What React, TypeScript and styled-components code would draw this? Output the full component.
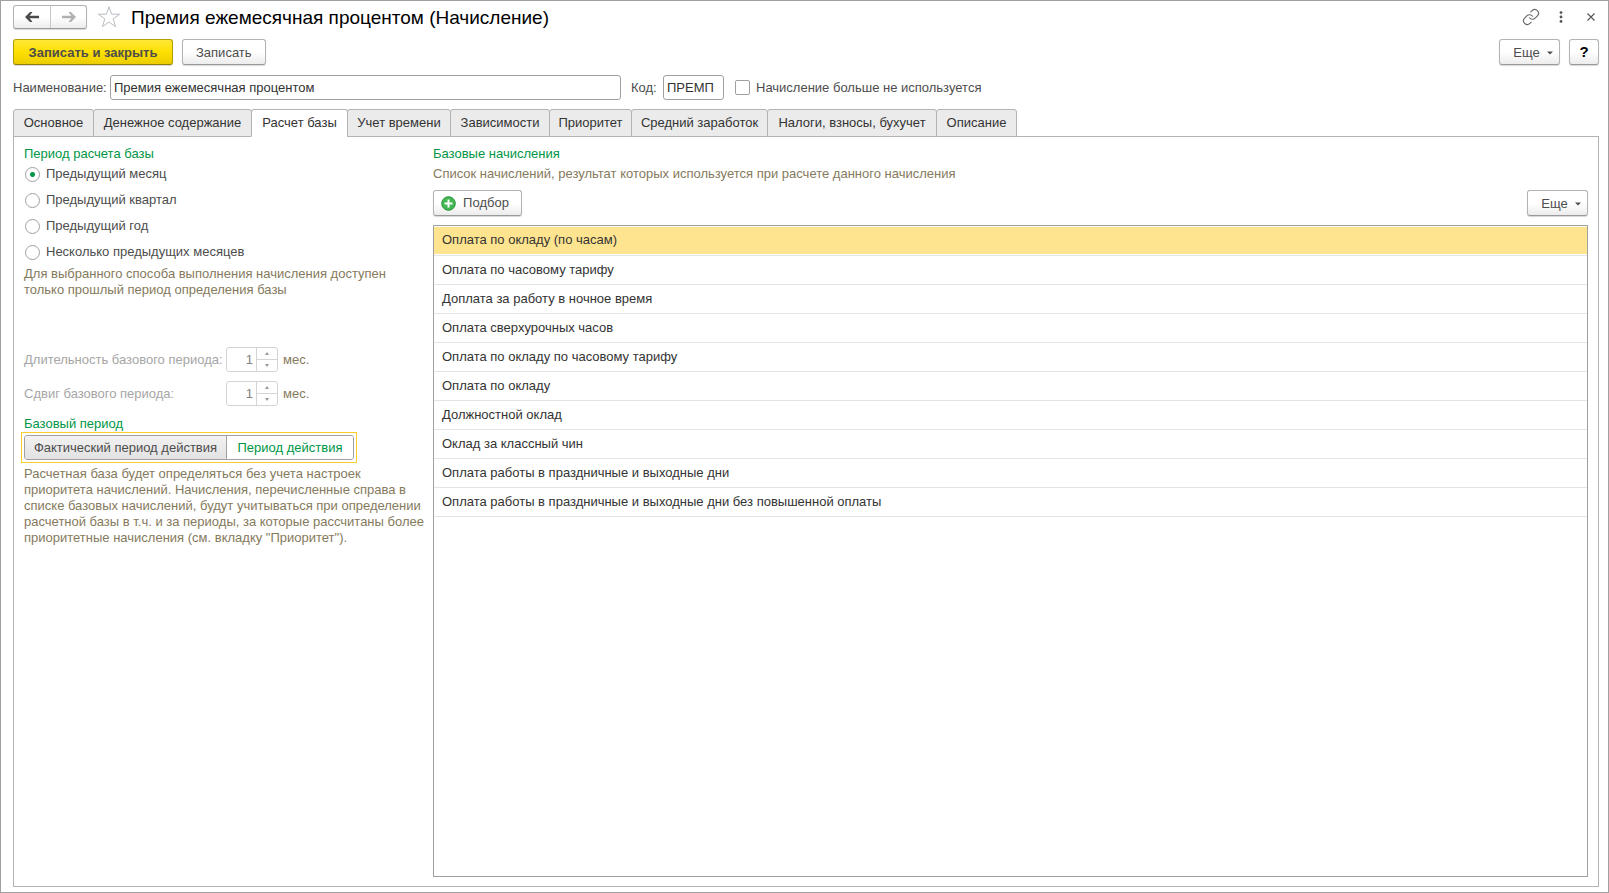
import React, { useState } from "react";
import styled, { createGlobalStyle, css } from "styled-components";
import { Link as LinkIcon } from "lucide-react";

const GlobalStyle = createGlobalStyle`
  *, *::before, *::after { box-sizing: border-box; }
  body { margin: 0; background: #fff; }
  body, button, input { font-family: "Liberation Sans", Arial, sans-serif; font-size: 13px; line-height: 16px; color: #4d4d4d; }
  h1, h2, p, fieldset, legend { margin: 0; padding: 0; border: 0; font-weight: normal; }
`;

const Window = styled.main`
  display: flex;
  flex-direction: column;
  min-height: 100vh;
  padding: 4px 9px 5px 12px;
  border: 1px solid #a0a0a0;
  background: #fff;
`;

const TitleBar = styled.header`
  display: flex;
  align-items: center;
  height: 24px;
  margin-bottom: 10px;
`;

const Title = styled.h1`
  flex: 1;
  padding-top: 1px;
  color: #000;
  font-size: 19px;
  line-height: 24px;
`;

const NavGroup = styled.div`
  display: flex;
  height: 24px;
  border: 1px solid #b3b3b3;
  border-bottom-color: #9a9a9a;
  border-radius: 3px;
  background: linear-gradient(#fff 50%, #ececec);
  box-shadow: 0 1px 1px #d8d8d8;
`;

const NavButton = styled.button`
  display: flex;
  align-items: center;
  justify-content: center;
  width: 36px;
  padding: 0;
  border: 0;
  background: none;
  & + & { border-left: 1px solid #c8c8c8; }
`;

const IconButton = styled.button`
  display: flex;
  align-items: center;
  justify-content: center;
  width: 30px;
  height: 24px;
  padding: 0;
  border: 0;
  background: none;
`;

const StarButton = styled(IconButton)`
  width: 24px;
  margin: 0 10px;
`;

const WindowTools = styled.div`
  display: flex;
  margin-right: -7px;
`;

const CommandBar = styled.div`
  display: flex;
  gap: 9px;
  margin-bottom: 10px;
`;

const Spacer = styled.div`
  flex: 1;
`;

const Button = styled.button<{ $primary?: boolean }>`
  display: flex;
  align-items: center;
  justify-content: center;
  height: 26px;
  padding: 1px 13px 0;
  border: 1px solid #b3b3b3;
  border-bottom-color: #9a9a9a;
  border-radius: 3px;
  background: linear-gradient(#fff 50%, #ececec);
  box-shadow: 0 1px 1px #d8d8d8;
  ${(p) =>
    p.$primary &&
    css`
      min-width: 160px;
      border-color: #b59f00;
      border-bottom-color: #8f7e00;
      background: linear-gradient(#ffe838, #ffdf00 50%, #ebcd00);
      font-weight: bold;
    `}
`;

const MoreButton = styled(Button)`
  gap: 7px;
  width: 61px;
  padding: 1px 5px 0 12px;
`;

const HelpButton = styled(Button)`
  width: 30px;
  padding: 0;
  color: #000;
  font-size: 15px;
  font-weight: bold;
`;

const PickButton = styled(Button)`
  gap: 7px;
  width: 89px;
  padding: 0 12px 0 7px;
`;

const FieldBar = styled.div`
  display: flex;
  align-items: center;
  margin-bottom: 9px;
`;

const FieldLabel = styled.label<{ $width: number }>`
  width: ${(p) => p.$width}px;
  white-space: nowrap;
`;

const TextField = styled.input<{ $width: number }>`
  width: ${(p) => p.$width}px;
  height: 25px;
  margin: 0 10px 0 0;
  padding: 0 3px;
  border: 1px solid #a0a0a0;
  border-radius: 3px;
  color: #333;
`;

const CheckLabel = styled.label`
  display: flex;
  align-items: center;
  gap: 6px;
  padding-left: 1px;
`;

const Checkbox = styled.input`
  appearance: none;
  width: 15px;
  height: 15px;
  margin: 0;
  border: 1px solid #a0a0a0;
  border-radius: 2px;
  background: #fff;
  &:checked { background: #009646; box-shadow: inset 0 0 0 3px #fff; }
`;

const TabBar = styled.div`
  position: relative;
  display: flex;
  margin-bottom: -1px;
`;

const Tab = styled.button<{ $active: boolean; $width: number }>`
  width: ${(p) => p.$width}px;
  height: 28px;
  padding: 0;
  border: 1px solid #b3b3b3;
  border-radius: 3px 3px 0 0;
  background: #ebebeb;
  color: #333;
  white-space: nowrap;
  & + & { margin-left: -1px; }
  ${(p) => p.$active && css`
    border-bottom-color: #fff;
    background: #fff;
  `}
`;

const Panel = styled.section`
  display: grid;
  grid-template-columns: 400px minmax(0, 1fr);
  gap: 9px;
  flex: 1;
  padding: 9px 10px;
  border: 1px solid #b3b3b3;
`;

const Column = styled.div`
  display: flex;
  flex-direction: column;
`;

const Heading = styled.h2`
  color: #009646;
  font-size: 13px;
  line-height: 16px;
`;

const ListHeading = styled(Heading)`
  margin-bottom: 4px;
`;

const Hint = styled.p`
  color: #857a5c;
`;

const RadioList = styled.fieldset`
  display: flex;
  flex-direction: column;
  margin-bottom: 1px;
`;

const RadioLegend = styled.legend`
  margin-bottom: -1px;
  color: #009646;
`;

const RadioLabel = styled.label`
  display: flex;
  align-items: center;
  gap: 6px;
  height: 26px;
  padding-left: 1px;
`;

const Radio = styled.input`
  appearance: none;
  width: 15px;
  height: 15px;
  margin: 0;
  border: 1px solid #a0a0a0;
  border-radius: 50%;
  background: #fff;
  &:checked { background: radial-gradient(circle, #009646 2px, #fff 3px); }
`;

const Durations = styled.div`
  display: flex;
  flex-direction: column;
  gap: 9px;
  margin: 49px 0 10px;
`;

const DurationRow = styled.div`
  display: grid;
  grid-template-columns: 202px 52px auto;
  align-items: center;
  color: #857a5c;
`;

const DurationLabel = styled.label`
  color: #a6a6a6;
`;

const Unit = styled.span`
  margin-left: 5px;
`;

const Spinner = styled.div`
  display: flex;
  height: 25px;
  border: 1px solid #d4d4d4;
  border-radius: 3px;
`;

const SpinInput = styled.input`
  width: 29px;
  padding: 0 3px;
  border: 0;
  background: none;
  color: #808080;
  text-align: right;
`;

const SpinButtons = styled.div`
  display: flex;
  flex: 1;
  flex-direction: column;
  border-left: 1px solid #d4d4d4;
`;

const SpinButton = styled.button`
  display: flex;
  flex: 1;
  align-items: center;
  justify-content: center;
  padding: 0;
  border: 0;
  background: none;
  & + & { border-top: 1px solid #d4d4d4; }
`;

const FocusFrame = styled.div`
  align-self: flex-start;
  margin: 0 0 3px -3px;
  padding: 2px;
  border: 1px solid #f7cf2d;
`;

const Switch = styled.div`
  display: flex;
  border: 1px solid #a0a0a0;
  border-radius: 3px;
`;

const SwitchButton = styled.button<{ $on: boolean; $width: number }>`
  width: ${(p) => p.$width}px;
  height: 23px;
  padding: 0;
  border: 0;
  border-radius: 2px;
  background: ${(p) => (p.$on ? "#fff" : "linear-gradient(#f2f2f2, #e2e2e2)")};
  color: ${(p) => (p.$on ? "#009646" : "#4d4d4d")};
  white-space: nowrap;
  & + & { border-left: 1px solid #a0a0a0; border-radius: 0 2px 2px 0; }
`;

const ListTools = styled.div`
  display: flex;
  justify-content: space-between;
  margin: 8px 0 9px;
`;

const ListFrame = styled.div`
  flex: 1;
  border: 1px solid #a0a0a0;
`;

const List = styled.table`
  width: 100%;
  border-collapse: collapse;
`;

const Cell = styled.td<{ $selected: boolean }>`
  height: 29px;
  padding: 0 8px;
  border-bottom: 1px solid #e4e4e4;
  color: #333;
  ${(p) => p.$selected && css`
    background: #ffe48f;
    box-shadow: inset 0 1px #fff, inset 0 -1px #fff;
  `}
`;

const Arrow = ({ color, back }: { color: string; back?: boolean }) => (
  <svg width="14" height="10" viewBox="0 0 14 10" fill={color}>
    <path d={back ? "M0 5L5 0H7.200V0.600L4.600 3.800H14V6.200H4.600L7.200 9.400V10H5Z" : "M14 5L9 0H6.800V0.600L9.400 3.800H0V6.200H9.400L6.800 9.400V10H9Z"} />
  </svg>
);

const Caret = () => (
  <svg width="6" height="4" viewBox="0 0 6 4" fill="#4d4d4d">
    <path d="M0 0.5H6L3 3.5Z" />
  </svg>
);

const SpinArrow = ({ up }: { up?: boolean }) => (
  <svg width="4" height="3" viewBox="0 0 4 3" fill="#999">
    <path d={up ? "M0 3L2 0L4 3Z" : "M0 0L2 3L4 0Z"} />
  </svg>
);

const Star = () => (
  <svg width="24" height="24" viewBox="0 0 24 24" fill="#fff" stroke="#b8bcc2">
    <path d="M12 1.8L14.6 9.2H22.6L16.2 13.9L18.6 21.7L12 17L5.4 21.7L7.8 13.9L1.4 9.2H9.4Z" />
  </svg>
);

const Dots = () => (
  <svg width="4" height="12" viewBox="0 0 4 12" fill="#555">
    <circle cx="2" cy="1.6" r="1.4" />
    <circle cx="2" cy="6" r="1.4" />
    <circle cx="2" cy="10.4" r="1.4" />
  </svg>
);

const Cross = () => (
  <svg width="8" height="8" viewBox="0 0 8 8" stroke="#555" strokeWidth="1.1">
    <path d="M0.5 0.5L7.5 7.5M7.5 0.5L0.5 7.5" />
  </svg>
);

const Plus = () => (
  <svg width="15" height="15" viewBox="0 0 15 15">
    <circle cx="7.5" cy="7.5" r="6.8" fill="#43b752" stroke="#279239" />
    <path d="M7.5 3.5V11.5M3.5 7.5H11.5" stroke="#fff" strokeWidth="2" />
  </svg>
);

const tabs = [
  { name: "Основное", width: 81 },
  { name: "Денежное содержание", width: 159 },
  { name: "Расчет базы", width: 97 },
  { name: "Учет времени", width: 104 },
  { name: "Зависимости", width: 100 },
  { name: "Приоритет", width: 83 },
  { name: "Средний заработок", width: 137 },
  { name: "Налоги, взносы, бухучет", width: 170 },
  { name: "Описание", width: 81 },
];

const modes = [
  { name: "Фактический период действия", width: 201 },
  { name: "Период действия", width: 127 },
];

const periods = ["Предыдущий месяц", "Предыдущий квартал", "Предыдущий год", "Несколько предыдущих месяцев"];

const accruals = [
  "Оплата по окладу (по часам)",
  "Оплата по часовому тарифу",
  "Доплата за работу в ночное время",
  "Оплата сверхурочных часов",
  "Оплата по окладу по часовому тарифу",
  "Оплата по окладу",
  "Должностной оклад",
  "Оклад за классный чин",
  "Оплата работы в праздничные и выходные дни",
  "Оплата работы в праздничные и выходные дни без повышенной оплаты",
];

const Duration = ({ id, label }: { id: string; label: string }) => (
  <DurationRow>
    <DurationLabel htmlFor={id}>{label}</DurationLabel>
    <Spinner>
      <SpinInput id={id} defaultValue="1" disabled />
      <SpinButtons>
        <SpinButton disabled aria-label="Увеличить"><SpinArrow up /></SpinButton>
        <SpinButton disabled aria-label="Уменьшить"><SpinArrow /></SpinButton>
      </SpinButtons>
    </Spinner>
    <Unit>мес.</Unit>
  </DurationRow>
);

export default function App() {
  const [tab, setTab] = useState(2);
  const [row, setRow] = useState(0);
  const [mode, setMode] = useState(1);

  return (
    <>
      <GlobalStyle />
      <Window>
        <TitleBar>
          <NavGroup>
            <NavButton aria-label="Назад"><Arrow back color="#4a4a4a" /></NavButton>
            <NavButton aria-label="Вперед"><Arrow color="#b0b0b0" /></NavButton>
          </NavGroup>
          <StarButton aria-label="В избранное"><Star /></StarButton>
          <Title>Премия ежемесячная процентом (Начисление)</Title>
          <WindowTools>
            <IconButton aria-label="Получить ссылку"><LinkIcon size={18} strokeWidth={1.5} color="#666" /></IconButton>
            <IconButton aria-label="Меню"><Dots /></IconButton>
            <IconButton aria-label="Закрыть"><Cross /></IconButton>
          </WindowTools>
        </TitleBar>

        <CommandBar>
          <Button $primary>Записать и закрыть</Button>
          <Button>Записать</Button>
          <Spacer />
          <MoreButton>Еще <Caret /></MoreButton>
          <HelpButton>?</HelpButton>
        </CommandBar>

        <FieldBar>
          <FieldLabel $width={97} htmlFor="name">Наименование:</FieldLabel>
          <TextField id="name" $width={511} defaultValue="Премия ежемесячная процентом" />
          <FieldLabel $width={32} htmlFor="code">Код:</FieldLabel>
          <TextField id="code" $width={61} defaultValue="ПРЕМП" />
          <CheckLabel>
            <Checkbox type="checkbox" />
            Начисление больше не используется
          </CheckLabel>
        </FieldBar>

        <TabBar role="tablist">
          {tabs.map(({ name, width }, i) => (
            <Tab key={name} role="tab" aria-selected={i === tab} $active={i === tab} $width={width} onClick={() => setTab(i)}>
              {name}
            </Tab>
          ))}
        </TabBar>

        <Panel>
          <Column>
            <RadioList>
              <RadioLegend>Период расчета базы</RadioLegend>
              {periods.map((name, i) => (
                <RadioLabel key={name}>
                  <Radio type="radio" name="period" defaultChecked={i === 0} />
                  {name}
                </RadioLabel>
              ))}
            </RadioList>
            <Hint>Для выбранного способа выполнения начисления доступен<br />только прошлый период определения базы</Hint>
            <Durations>
              <Duration id="length" label="Длительность базового периода:" />
              <Duration id="shift" label="Сдвиг базового периода:" />
            </Durations>
            <Heading>Базовый период</Heading>
            <FocusFrame>
              <Switch>
                {modes.map(({ name, width }, i) => (
                  <SwitchButton key={name} $on={i === mode} $width={width} aria-pressed={i === mode} onClick={() => setMode(i)}>
                    {name}
                  </SwitchButton>
                ))}
              </Switch>
            </FocusFrame>
            <Hint>
              Расчетная база будет определяться без учета настроек<br />
              приоритета начислений. Начисления, перечисленные справа в<br />
              списке базовых начислений, будут учитываться при определении<br />
              расчетной базы в т.ч. и за периоды, за которые рассчитаны более<br />
              приоритетные начисления (см. вкладку "Приоритет").
            </Hint>
          </Column>

          <Column>
            <ListHeading>Базовые начисления</ListHeading>
            <Hint>Список начислений, результат которых используется при расчете данного начисления</Hint>
            <ListTools>
              <PickButton><Plus />Подбор</PickButton>
              <MoreButton>Еще <Caret /></MoreButton>
            </ListTools>
            <ListFrame>
              <List>
                <tbody>
                  {accruals.map((name, i) => (
                    <tr key={name} onClick={() => setRow(i)}>
                      <Cell $selected={i === row}>{name}</Cell>
                    </tr>
                  ))}
                </tbody>
              </List>
            </ListFrame>
          </Column>
        </Panel>
      </Window>
    </>
  );
}
